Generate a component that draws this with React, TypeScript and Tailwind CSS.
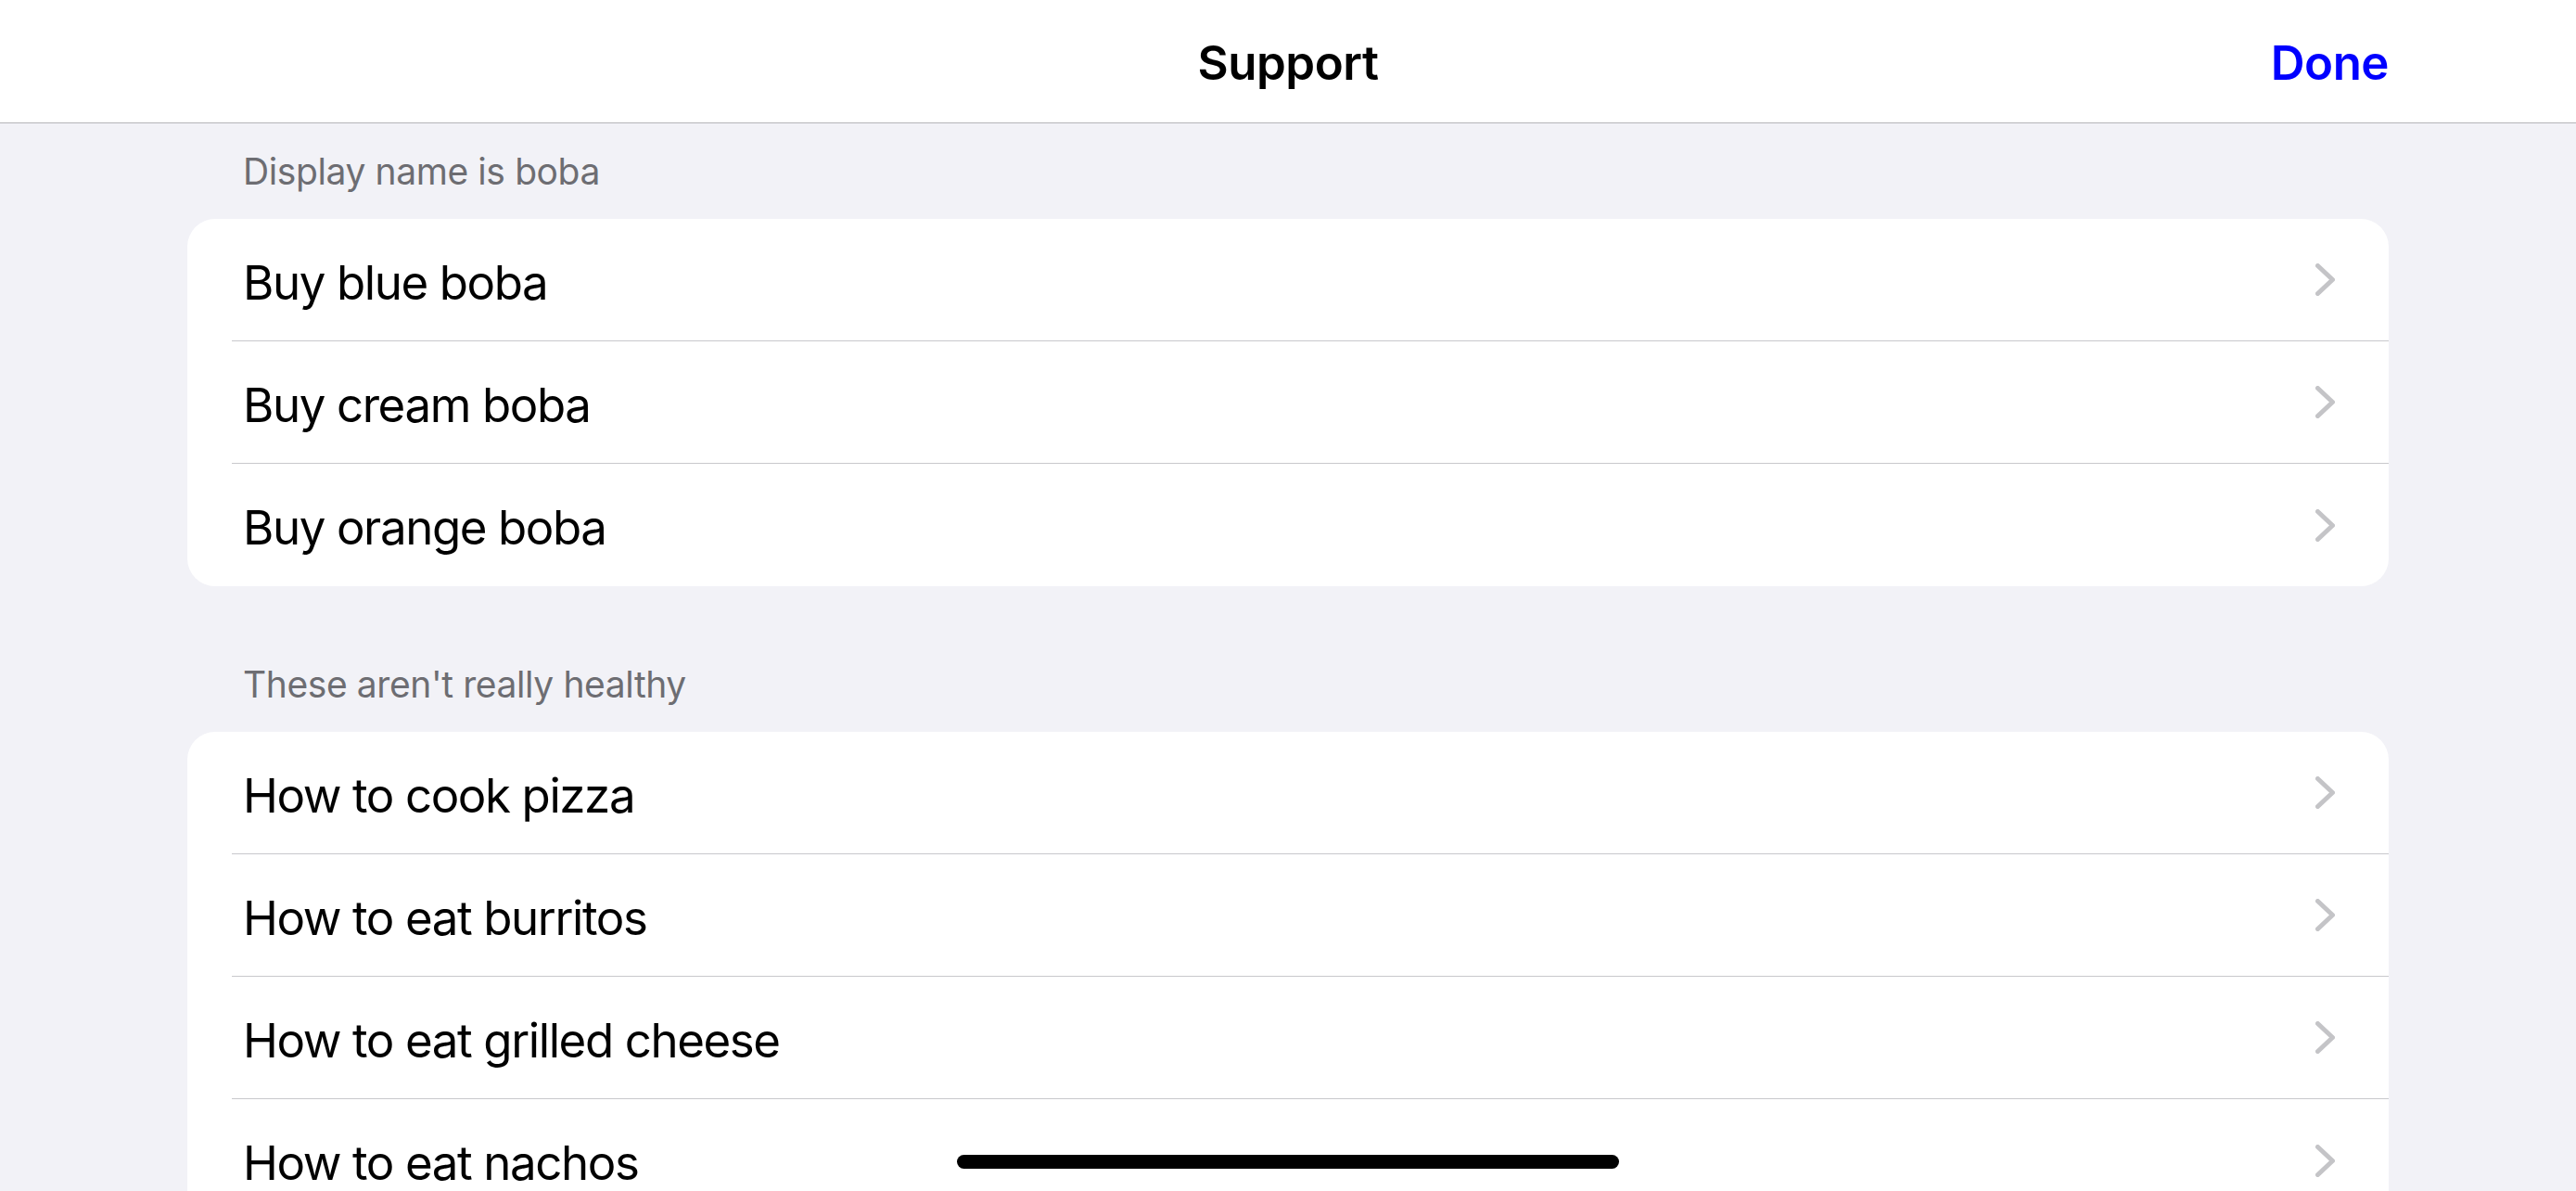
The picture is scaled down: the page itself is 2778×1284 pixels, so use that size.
import React from 'react';

type Section = {
  title: string;
  items: string[];
};

const sections: Section[] = [
  {
    title: 'Display name is boba',
    items: ['Buy blue boba', 'Buy cream boba', 'Buy orange boba'],
  },
  {
    title: "These aren't really healthy",
    items: ['How to cook pizza', 'How to eat burritos', 'How to eat grilled cheese', 'How to eat nachos'],
  },
];

function Chevron() {
  return (
    <svg width="21" height="35" viewBox="0 0 21 35" fill="none" className="shrink-0">
      <path d="M2.5 2.5 L18.5 17.5 L2.5 32.5" stroke="#c4c4c7" strokeWidth="5" strokeLinecap="round" strokeLinejoin="round" />
    </svg>
  );
}

export default function App() {
  return (
    <div
      className="relative h-[1284px] w-[2778px] overflow-hidden bg-[#f2f2f7] text-black"
      style={{ fontFamily: 'Inter, "Noto Sans", sans-serif' }}
    >
      {/* Nav bar */}
      <div className="relative flex h-[133px] items-center justify-center border-b border-[#b4b4b8] bg-white">
        <h1 className="pt-[2px] text-[51px] font-semibold leading-none tracking-[-0.5px]">Support</h1>
        <button className="absolute right-[202px] pt-[2px] text-[51px] font-semibold leading-none tracking-[-0.5px] text-[#0000ff]">
          Done
        </button>
      </div>

      {/* List */}
      <div className="flex flex-col px-[202px]">
        {sections.map((section, si) => (
          <div key={section.title} className="flex flex-col">
            <p
              className={`${si === 0 ? 'pt-[28px]' : 'pt-[82px]'} pb-[28px] pl-[60px] text-[39px] leading-[47px] tracking-[-0.4px] text-[#6d6d72]`}
            >
              {section.title}
            </p>
            <div className="flex flex-col overflow-hidden rounded-[30px] bg-white">
              {section.items.map((item, i) => (
                <div key={item} className="flex h-[132px] flex-col pl-[48px]">
                  <div className="flex flex-1 items-center justify-between pl-[12px] pr-[58px]">
                    <span className="pt-[5px] text-[51px] leading-none tracking-[-1.4px]">{item}</span>
                    <Chevron />
                  </div>
                  {i < section.items.length - 1 && <div className="h-px bg-[#c8c8cc]" />}
                </div>
              ))}
            </div>
          </div>
        ))}
      </div>

      {/* Home indicator */}
      <div className="absolute bottom-[24px] left-1/2 h-[15px] w-[714px] -translate-x-1/2 rounded-full bg-black" />
    </div>
  );
}
